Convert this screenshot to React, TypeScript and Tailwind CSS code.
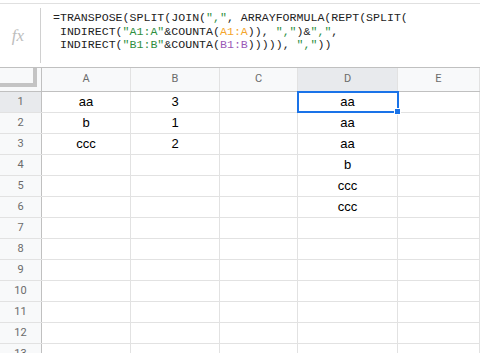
const cols = [
  { name: 'A', w: 'w-[89px]' },
  { name: 'B', w: 'w-[89px]' },
  { name: 'C', w: 'w-[78px]' },
  { name: 'D', w: 'w-[100px]' },
  { name: 'E', w: 'flex-1' },
]

const data: Record<number, string[]> = {
  1: ['aa', '3', '', 'aa', ''],
  2: ['b', '1', '', 'aa', ''],
  3: ['ccc', '2', '', 'aa', ''],
  4: ['', '', '', 'b', ''],
  5: ['', '', '', 'ccc', ''],
  6: ['', '', '', 'ccc', ''],
}

const rows = Array.from({ length: 13 }, (_, i) => i + 1)

const Str = ({ children }: { children: string }) => <span className="text-[#2f8f3f]">{children}</span>

const FormulaBar = () => (
  <div className="mt-[3px] flex h-[64px] border-t border-[#e0e0e0] bg-white">
    <div className="flex w-[42px] shrink-0 items-center py-[4px]">
      <div className="flex h-full w-[41px] items-center justify-center border-r border-[#d0d0d0] pr-[4px]">
        <span className="font-['Liberation_Serif',serif] text-[17px] italic text-[#bdbdbd]">fx</span>
      </div>
    </div>
    <pre className="pl-[11px] pt-[7px] font-['Liberation_Mono',monospace] text-[11.6px] leading-[13.5px] text-[#222]">
      {'=TRANSPOSE(SPLIT(JOIN('}
      <Str>{'","'}</Str>
      {', ARRAYFORMULA(REPT(SPLIT(\n INDIRECT('}
      <Str>{'"A1:A"'}</Str>
      {'&COUNTA('}
      <span className="text-[#f4a52a]">A1:A</span>
      {')), '}
      <Str>{'","'}</Str>
      {')&'}
      <Str>{'","'}</Str>
      {',\n INDIRECT('}
      <Str>{'"B1:B"'}</Str>
      {'&COUNTA('}
      <span className="text-[#9b59b6]">B1:B</span>
      {'))))), '}
      <Str>{'","'}</Str>
      {'))'}
    </pre>
  </div>
)

const App = () => {
  return (
    <div className="h-[353px] w-[480px] overflow-hidden bg-white font-['Liberation_Sans',Arial,sans-serif]">
      <FormulaBar />
      <div className="relative">
        {/* column headers */}
        <div className="flex h-[25px] border-y border-[#c0c0c0] bg-[#f8f9fa]">
          <div className="w-[42px] shrink-0 border-r border-[#c0c0c0] pr-[1px]">
            <div className="h-[19px] w-[37px] border-b-[4px] border-r-[4px] border-[#c4c4c4]" />
          </div>
          {cols.map((c) => (
            <div
              key={c.name}
              className={`${c.w} flex shrink-0 items-center justify-center border-r border-[#e2e2e2] font-['Roboto',sans-serif] text-[11px] text-[#6b6b6b] ${c.name === 'D' ? 'bg-[#e8eaed]' : ''}`}
            >
              {c.name}
            </div>
          ))}
        </div>

        {rows.map((r) => (
          <div key={r} className="flex h-[21px] border-b border-[#e2e2e2]">
            <div
              className={`flex w-[42px] shrink-0 items-center justify-center border-r border-[#c0c0c0] font-['Roboto',sans-serif] text-[11px] text-[#6b6b6b] ${r === 1 ? 'bg-[#e8eaed]' : 'bg-[#f8f9fa]'}`}
            >
              {r}
            </div>
            {cols.map((c, i) => (
              <div
                key={c.name}
                className={`${c.w} flex shrink-0 items-center justify-center border-r border-[#e2e2e2] text-[13px] text-black`}
              >
                {data[r]?.[i] ?? ''}
              </div>
            ))}
          </div>
        ))}

        {/* selection on D1 */}
        <div className="absolute left-[297px] top-[24px] h-[22px] w-[102px] border-2 border-[#1a73e8]" />
        <div className="absolute left-[394px] top-[41px] h-[7px] w-[7px] border border-white bg-[#1a73e8]" />
      </div>
    </div>
  )
}

export default App
